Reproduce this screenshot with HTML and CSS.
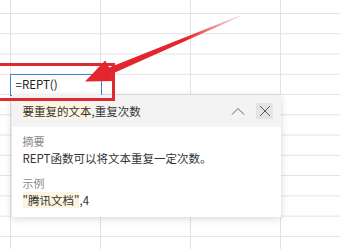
FILE: index.html
```html
<!DOCTYPE html>
<html lang="zh-CN">
<head>
<meta charset="utf-8">
<link rel="stylesheet" href="styles.css">
</head>
<body>
<div class="sheet">
  <div class="active-cell">=REPT()</div>
</div>

<div class="tip">
  <div class="tip-head">
    <div class="tip-sig"><span class="hl">要重复的文本</span>,重复次数</div>
    <div class="tip-tools">
      <svg class="caret" width="14" height="8" viewBox="0 0 14 8"><path d="M1 7.5 L7 1.5 L13 7.5" fill="none" stroke="#666" stroke-width="1"/></svg>
      <span class="close"><svg width="12" height="12" viewBox="0 0 12 12"><path d="M1 1 L11 11 M11 1 L1 11" fill="none" stroke="#5a5a5a" stroke-width="1"/></svg></span>
    </div>
  </div>
  <div class="tip-body">
    <div class="group">
      <div class="label">摘要</div>
      <div class="text">REPT函数可以将文本重复一定次数。</div>
    </div>
    <div class="group">
      <div class="label">示例</div>
      <div class="text"><span class="hl">"腾讯文档"</span>,4</div>
    </div>
  </div>
</div>

<div class="redbox"></div>

<svg class="arrow" width="340" height="249" viewBox="0 0 340 249">
  <defs>
    <linearGradient id="fade" gradientUnits="userSpaceOnUse" x1="240" y1="16" x2="185" y2="39">
      <stop offset="0" stop-color="#e3262e" stop-opacity="0.12"/>
      <stop offset="1" stop-color="#e3262e" stop-opacity="1"/>
    </linearGradient>
  </defs>
  <polygon fill="url(#fade)" points="239.8,15.4 109.2,67.5 105.2,60.5 85,81.5 114.5,81.0 111.6,74.0 240.2,16.6"/>
</svg>
</body>
</html>
```

FILE: styles.css
```css
* { box-sizing: border-box; }
html, body { margin: 0; padding: 0; }
body {
  width: 340px;
  height: 249px;
  overflow: hidden;
  background: #fff;
  font-family: "Noto Sans CJK SC", "Noto Sans", sans-serif;
  position: relative;
}
.sheet {
  width: 340px;
  height: 249px;
  display: grid;
  grid-template-columns: 10px repeat(3, 90px) 1fr;
  grid-template-rows: 13px repeat(11, 20.27px) 1fr;
  background-image:
    linear-gradient(to right, #e2e2e2 1px, transparent 1px),
    linear-gradient(to bottom, #e2e2e2 1px, transparent 1px);
  background-size: 90px 100%, 100% 20.27px;
  background-position: 10px 0, 0 13px;
}
.active-cell {
  grid-row: 5;
  grid-column: 2;
  margin-right: -2px;
  margin-bottom: -2px;
  border: 1.5px solid #4a80d4;
  background: #fff;
  font-size: 11.5px;
  color: #222;
  padding-left: 4.5px;
  display: flex;
  align-items: center;
  line-height: 1;
}
.tip {
  position: absolute;
  left: 12px;
  top: 95px;
  width: 269px;
  height: 122px;
  background: #fff;
  box-shadow: 0 2px 8px rgba(0,0,0,0.14), 0 0 2px rgba(0,0,0,0.06);
}
.tip-head {
  height: 32px;
  background: #f3f3f3;
  display: flex;
  align-items: center;
  justify-content: space-between;
  padding: 0 8px 0 10.5px;
}
.tip-sig {
  font-size: 11.5px;
  color: #333;
}
.hl { background: #fcf4df; }
.tip-tools {
  display: flex;
  align-items: center;
  gap: 11px;
}
.caret { display: block; }
.close {
  width: 17px;
  height: 16px;
  background: #e4e4e4;
  display: flex;
  align-items: center;
  justify-content: center;
}
.close svg { display: block; }
.tip-body {
  padding: 6px 10.5px 0;
  display: flex;
  flex-direction: column;
  gap: 8px;
}
.group { display: flex; flex-direction: column; }
.label {
  font-size: 11px;
  line-height: 17px;
  color: #8a8a8a;
}
.text {
  font-size: 11.5px;
  line-height: 17px;
  color: #333;
}
.redbox {
  position: absolute;
  left: -6px;
  top: 63px;
  width: 121px;
  height: 38px;
  border: 3px solid #dc2a2e;
}
.arrow {
  position: absolute;
  left: 0;
  top: 0;
}
```
